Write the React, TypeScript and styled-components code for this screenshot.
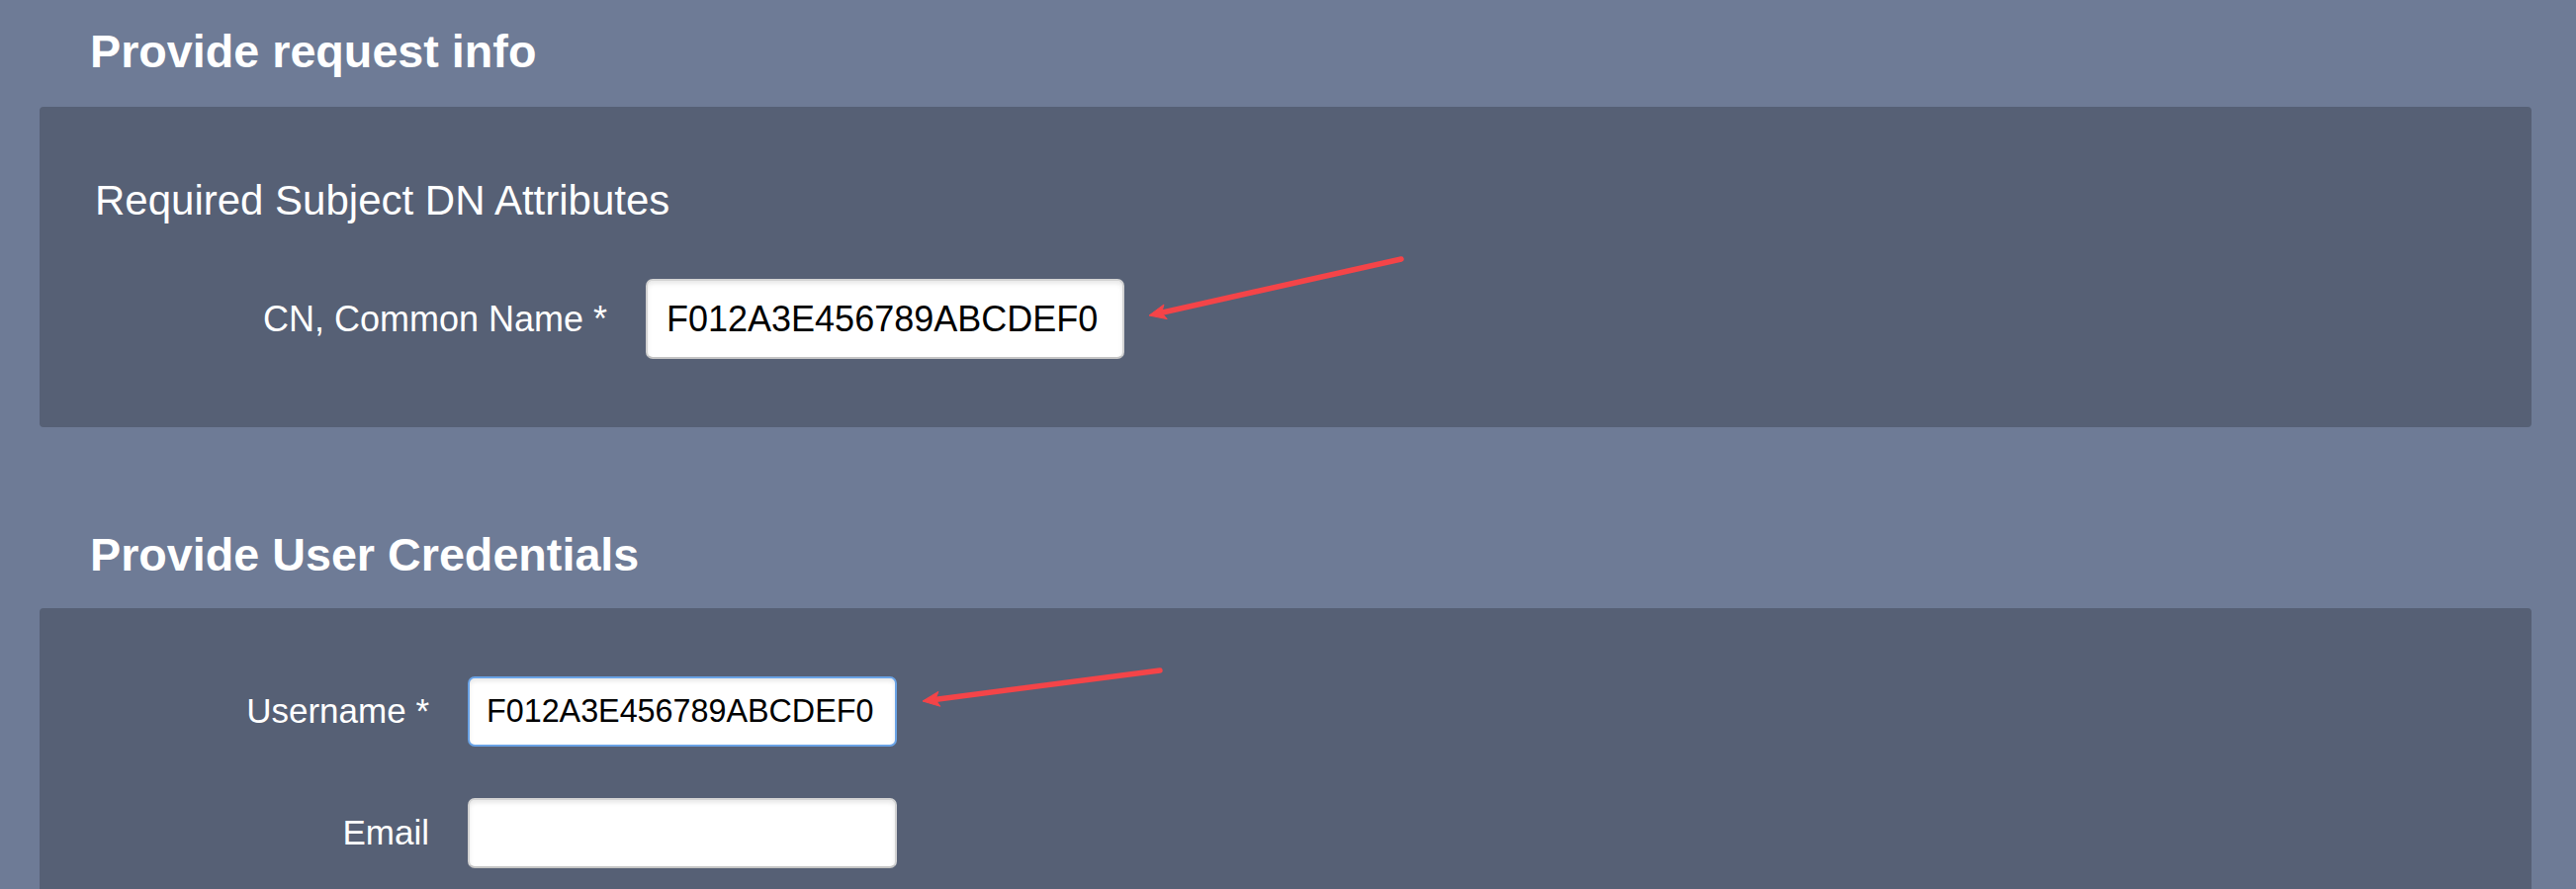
import React from 'react';
import styled, { createGlobalStyle } from 'styled-components';

const GlobalStyle = createGlobalStyle`
  html, body {
    margin: 0;
    padding: 0;
    overflow: hidden;
    background: #6e7b96;
    font-family: "Liberation Sans", Arial, sans-serif;
  }
`;

const Page = styled.main`
  position: relative;
  padding: 25px 45px 0 40px;
  min-height: 899px;
  box-sizing: border-box;
`;

const Section = styled.section<{ $top: number }>`
  margin-top: ${(p) => p.$top}px;
`;

const SectionTitle = styled.h2<{ $gap: number }>`
  margin: 0 0 ${(p) => p.$gap}px 51px;
  font-size: 46.7px;
  line-height: 54px;
  font-weight: bold;
  color: #ffffff;
`;

const Panel = styled.div<{ $pad: string }>`
  background: #566075;
  border-radius: 4px;
  padding: ${(p) => p.$pad};
`;

const Subtitle = styled.h3`
  margin: 0 0 55px 56px;
  font-size: 42px;
  line-height: 48px;
  font-weight: normal;
  color: #ffffff;
`;

const Rows = styled.div<{ $gap: number }>`
  display: flex;
  flex-direction: column;
  gap: ${(p) => p.$gap}px;
`;

const Row = styled.div<{ $label: number; $input: number }>`
  display: grid;
  grid-template-columns: ${(p) => p.$label}px ${(p) => p.$input}px;
  column-gap: 39px;
  align-items: center;
`;

const Label = styled.label<{ $size: number }>`
  text-align: right;
  color: #ffffff;
  font-size: ${(p) => p.$size}px;
  line-height: 1.15;
`;

const Field = styled.input<{ $size: number; $height: number; $pad: number; $focus?: boolean }>`
  box-sizing: border-box;
  width: 100%;
  height: ${(p) => p.$height}px;
  padding: 0 ${(p) => p.$pad}px;
  font-family: "Liberation Sans", Arial, sans-serif;
  font-size: ${(p) => p.$size}px;
  color: #000;
  background: #fff;
  border: 2px solid ${(p) => (p.$focus ? '#6aa3e6' : '#d3d3d3')};
  border-bottom-color: ${(p) => (p.$focus ? '#6aa3e6' : '#c4c4c4')};
  border-radius: 7px;
  box-shadow: inset 0 3px 4px rgba(0, 0, 0, 0.09);
  outline: none;
`;

const Overlay = styled.svg`
  position: absolute;
  left: 0;
  top: 0;
  pointer-events: none;
`;

const Arrow = ({ tail, tip }: { tail: [number, number]; tip: [number, number] }) => {
  const dx = tip[0] - tail[0];
  const dy = tip[1] - tail[1];
  const len = Math.hypot(dx, dy);
  const ux = dx / len;
  const uy = dy / len;
  const headLen = 17;
  const headW = 15;
  const bx = tip[0] - ux * headLen;
  const by = tip[1] - uy * headLen;
  const nx = -uy * (headW / 2);
  const ny = ux * (headW / 2);
  return (
    <g fill="#f44448" stroke="#f44448">
      <line x1={tail[0]} y1={tail[1]} x2={bx + ux * 3} y2={by + uy * 3} strokeWidth={5.5} strokeLinecap="round" />
      <polygon
        strokeWidth={1}
        strokeLinejoin="round"
        points={`${tip[0]},${tip[1]} ${bx + nx},${by + ny} ${bx + ux * 4},${by + uy * 4} ${bx - nx},${by - ny}`}
      />
    </g>
  );
};

export default function App() {
  return (
    <>
      <GlobalStyle />
      <Page>
        <Section $top={0}>
          <SectionTitle $gap={29}>Provide request info</SectionTitle>
          <Panel $pad="71px 0 69px">
            <Subtitle>Required Subject DN Attributes</Subtitle>
            <Row $label={574} $input={484}>
              <Label $size={36}>CN, Common Name *</Label>
              <Field $size={36} $height={81} $pad={19} defaultValue="F012A3E456789ABCDEF0" />
            </Row>
          </Panel>
        </Section>

        <Section $top={102}>
          <SectionTitle $gap={27}>Provide User Credentials</SectionTitle>
          <Panel $pad="69px 0 69px">
            <Rows $gap={52}>
              <Row $label={394} $input={434}>
                <Label $size={35}>Username *</Label>
                <Field $size={32.3} $height={71} $pad={17} $focus defaultValue="F012A3E456789ABCDEF0" />
              </Row>
              <Row $label={394} $input={434}>
                <Label $size={35}>Email</Label>
                <Field $size={32.3} $height={71} $pad={17} defaultValue="" />
              </Row>
            </Rows>
          </Panel>
        </Section>

        <Overlay width={2605} height={899} viewBox="0 0 2605 899">
          <Arrow tail={[1417, 262]} tip={[1162, 319]} />
          <Arrow tail={[1173, 678]} tip={[933, 709]} />
        </Overlay>
      </Page>
    </>
  );
}
